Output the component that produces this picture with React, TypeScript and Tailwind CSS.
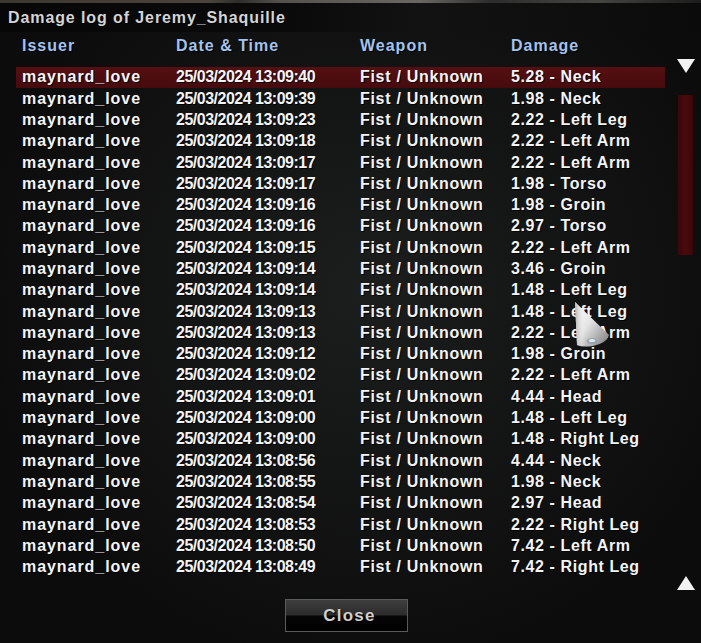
import React from "react";

type Hit = { time: string; damage: string };

const hits: Hit[] = [
  { time: "13:09:40", damage: "5.28 - Neck" },
  { time: "13:09:39", damage: "1.98 - Neck" },
  { time: "13:09:23", damage: "2.22 - Left Leg" },
  { time: "13:09:18", damage: "2.22 - Left Arm" },
  { time: "13:09:17", damage: "2.22 - Left Arm" },
  { time: "13:09:17", damage: "1.98 - Torso" },
  { time: "13:09:16", damage: "1.98 - Groin" },
  { time: "13:09:16", damage: "2.97 - Torso" },
  { time: "13:09:15", damage: "2.22 - Left Arm" },
  { time: "13:09:14", damage: "3.46 - Groin" },
  { time: "13:09:14", damage: "1.48 - Left Leg" },
  { time: "13:09:13", damage: "1.48 - Left Leg" },
  { time: "13:09:13", damage: "2.22 - Left Arm" },
  { time: "13:09:12", damage: "1.98 - Groin" },
  { time: "13:09:02", damage: "2.22 - Left Arm" },
  { time: "13:09:01", damage: "4.44 - Head" },
  { time: "13:09:00", damage: "1.48 - Left Leg" },
  { time: "13:09:00", damage: "1.48 - Right Leg" },
  { time: "13:08:56", damage: "4.44 - Neck" },
  { time: "13:08:55", damage: "1.98 - Neck" },
  { time: "13:08:54", damage: "2.97 - Head" },
  { time: "13:08:53", damage: "2.22 - Right Leg" },
  { time: "13:08:50", damage: "7.42 - Left Arm" },
  { time: "13:08:49", damage: "7.42 - Right Leg" },
];

const font = { fontFamily: '"Liberation Sans", Arial, sans-serif' };

function Cursor() {
  return (
    <svg
      className="absolute left-[572px] top-[300px] pointer-events-none"
      width="40"
      height="48"
      viewBox="0 0 40 48"
    >
      <defs>
        <linearGradient id="cone" x1="0" y1="0" x2="1" y2="1">
          <stop offset="0" stopColor="#ffffff" />
          <stop offset="0.45" stopColor="#e4e4e4" />
          <stop offset="1" stopColor="#777777" />
        </linearGradient>
        <linearGradient id="coneShade" x1="0" y1="0" x2="1" y2="0">
          <stop offset="0" stopColor="#b0b0b0" />
          <stop offset="0.3" stopColor="#ffffff" stopOpacity="0" />
        </linearGradient>
      </defs>
      <path d="M3 2 L37 35 Q35 43 21 46 Q11 47.5 5 45 Z" fill="url(#cone)" />
      <path d="M3 2 L37 35 Q35 43 21 46 Q11 47.5 5 45 Z" fill="url(#coneShade)" />
      <ellipse cx="20" cy="41" rx="5.5" ry="3" fill="#8fa3ad" opacity="0.8" />
      <ellipse cx="20" cy="40.5" rx="3.2" ry="1.6" fill="#dfe8ec" />
    </svg>
  );
}

export default function App() {
  return (
    <div
      className="relative w-[701px] h-[643px] overflow-hidden bg-[radial-gradient(ellipse_at_52%_45%,#1b1e1d_0%,#141615_35%,#0c0c0c_75%)] text-white"
      style={font}
    >
      {/* scene strip above the dialog */}
      <div className="h-[3px] bg-[linear-gradient(90deg,#3d3731,#4a443d_30%,#2e2d2b_34%,#55524d_40%,#6a6762_60%,#2c2c2c_70%,#454542_85%,#1c1c1c)]" />

      {/* title bar */}
      <div className="h-[29px] flex items-center pl-[8px] bg-[linear-gradient(90deg,#070707_0%,#0a0a0a_42%,#121212_60%,#0b0b0b_100%)]">
        <span className="text-[16px] font-bold tracking-[0.9px] text-[#d4d4d4] leading-none [text-shadow:1px_1px_0_#000]">
          Damage log of Jeremy_Shaquille
        </span>
      </div>

      {/* list + scrollbar */}
      <div className="h-[560px] flex">
        <div className="w-[665px] pl-[16px] flex flex-col">
          <div className="h-[27px] grid grid-cols-[154px_184px_151px_1fr] items-center pl-[6px] text-[16px] font-bold tracking-[1px] text-[#a3c3ee] leading-none [text-shadow:1px_1px_0_#000]">
            <span>Issuer</span>
            <span>Date &amp; Time</span>
            <span>Weapon</span>
            <span>Damage</span>
          </div>
          <div className="mt-[7.7px] flex flex-col">
            {hits.map((h, i) => (
              <div
                key={i}
                className={
                  "h-[21.3px] grid grid-cols-[154px_184px_151px_1fr] items-center pl-[6px] text-[16px] font-bold leading-none text-[#f4f4f4] [text-shadow:1px_1px_0_rgba(0,0,0,0.85)] " +
                  (i === 0
                    ? "bg-[linear-gradient(180deg,#560f12,#460b0e)]"
                    : "")
                }
              >
                <span className="tracking-[0.95px]">maynard_love</span>
                <span className="tracking-[-0.5px]">25/03/2024 {h.time}</span>
                <span className="tracking-[0.7px]">Fist / Unknown</span>
                <span className="tracking-[0.6px]">{h.damage}</span>
              </div>
            ))}
          </div>
        </div>

        {/* scrollbar */}
        <div className="ml-[10px] w-[21px] flex flex-col items-center pt-[26px]">
          <svg width="20" height="16" viewBox="0 0 20 16">
            <path d="M1 1 L19 1 L10 15 Z" fill="#f2f2f2" />
          </svg>
          <div className="mt-[21px] w-[15px] h-[160px] bg-[linear-gradient(90deg,#3a0709,#4a0a0d_50%,#38070a)]" />
          <div className="flex-1" />
          <svg width="20" height="16" viewBox="0 0 20 16" className="mb-[1px]">
            <path d="M10 1 L19 15 L1 15 Z" fill="#f2f2f2" />
          </svg>
        </div>
      </div>

      {/* close button */}
      <div className="mt-[7px] pl-[285px]">
        <button className="w-[123px] h-[33px] pl-[6px] border border-[#5a5a5a] bg-[linear-gradient(180deg,#3e3e3e_0%,#2c2c2c_48%,#060606_52%,#000000_100%)] flex items-center justify-center">
          <span className="text-[17px] font-bold tracking-[1.2px] text-[#cfcfcf] leading-none [text-shadow:1px_1px_0_#000]">
            Close
          </span>
        </button>
      </div>

      <Cursor />
    </div>
  );
}
